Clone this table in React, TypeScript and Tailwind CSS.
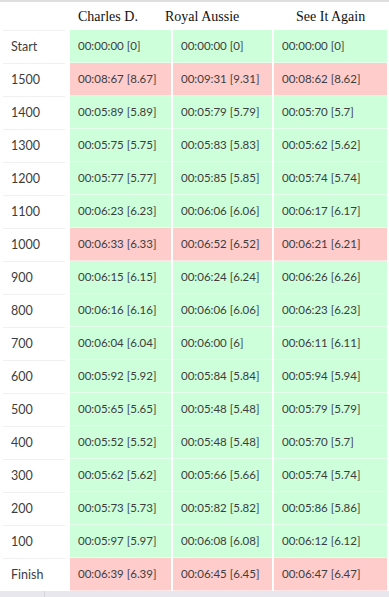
const rows: { label: string; splits: string[] }[] = [
  { label: "Start", splits: ["00:00:00 [0]", "00:00:00 [0]", "00:00:00 [0]"] },
  { label: "1500", splits: ["00:08:67 [8.67]", "00:09:31 [9.31]", "00:08:62 [8.62]"] },
  { label: "1400", splits: ["00:05:89 [5.89]", "00:05:79 [5.79]", "00:05:70 [5.7]"] },
  { label: "1300", splits: ["00:05:75 [5.75]", "00:05:83 [5.83]", "00:05:62 [5.62]"] },
  { label: "1200", splits: ["00:05:77 [5.77]", "00:05:85 [5.85]", "00:05:74 [5.74]"] },
  { label: "1100", splits: ["00:06:23 [6.23]", "00:06:06 [6.06]", "00:06:17 [6.17]"] },
  { label: "1000", splits: ["00:06:33 [6.33]", "00:06:52 [6.52]", "00:06:21 [6.21]"] },
  { label: "900", splits: ["00:06:15 [6.15]", "00:06:24 [6.24]", "00:06:26 [6.26]"] },
  { label: "800", splits: ["00:06:16 [6.16]", "00:06:06 [6.06]", "00:06:23 [6.23]"] },
  { label: "700", splits: ["00:06:04 [6.04]", "00:06:00 [6]", "00:06:11 [6.11]"] },
  { label: "600", splits: ["00:05:92 [5.92]", "00:05:84 [5.84]", "00:05:94 [5.94]"] },
  { label: "500", splits: ["00:05:65 [5.65]", "00:05:48 [5.48]", "00:05:79 [5.79]"] },
  { label: "400", splits: ["00:05:52 [5.52]", "00:05:48 [5.48]", "00:05:70 [5.7]"] },
  { label: "300", splits: ["00:05:62 [5.62]", "00:05:66 [5.66]", "00:05:74 [5.74]"] },
  { label: "200", splits: ["00:05:73 [5.73]", "00:05:82 [5.82]", "00:05:86 [5.86]"] },
  { label: "100", splits: ["00:05:97 [5.97]", "00:06:08 [6.08]", "00:06:12 [6.12]"] },
  { label: "Finish", splits: ["00:06:39 [6.39]", "00:06:45 [6.45]", "00:06:47 [6.47]"] },
];

// slow sections get the red background
const slowRows = ["1500", "1000", "Finish"];

function SplitCell({ value, slow }: { value: string; slow: boolean }) {
  return (
    <div
      className={`flex h-[33px] items-center pl-2 border-b border-white/50 ${
        slow ? "bg-[#ffcccc]" : "bg-[#ccffda]"
      }`}
    >
      {value}
    </div>
  );
}

function App() {
  return (
    <div className="w-[389px] h-[597px] bg-white overflow-hidden flex flex-col border-t-2 border-[#dedede]">
      {/* Horse names */}
      <div className="flex h-[28px] items-center text-[14px] text-[#111] font-['Liberation_Serif',serif]">
        <div className="w-[78px]" />
        <div className="w-[87px]">Charles D.</div>
        <div className="w-[131px]">Royal Aussie</div>
        <div>See It Again</div>
      </div>

      <div className="grid grid-cols-[68px_101px_99px_113px] gap-x-[2px] text-[11.5px] text-[#3d3d3d] font-['Lato',sans-serif]">
        {rows.map((row) => {
          const slow = slowRows.includes(row.label);
          return (
            <div key={row.label} className="contents">
              <div className="h-[33px] px-[3px]">
                <div className="h-full flex items-center pl-2 text-[12.5px] border-t border-[#f0f0f0]">
                  {row.label}
                </div>
              </div>
              {row.splits.map((s, i) => (
                <SplitCell key={i} value={s} slow={slow} />
              ))}
            </div>
          );
        })}
      </div>

      {/* scrollbar strip at the bottom */}
      <div className="flex-1 flex bg-[#e9e7ee]">
        <div className="w-[45px] border-r border-[#d6d4da]" />
      </div>
    </div>
  );
}

export default App;
